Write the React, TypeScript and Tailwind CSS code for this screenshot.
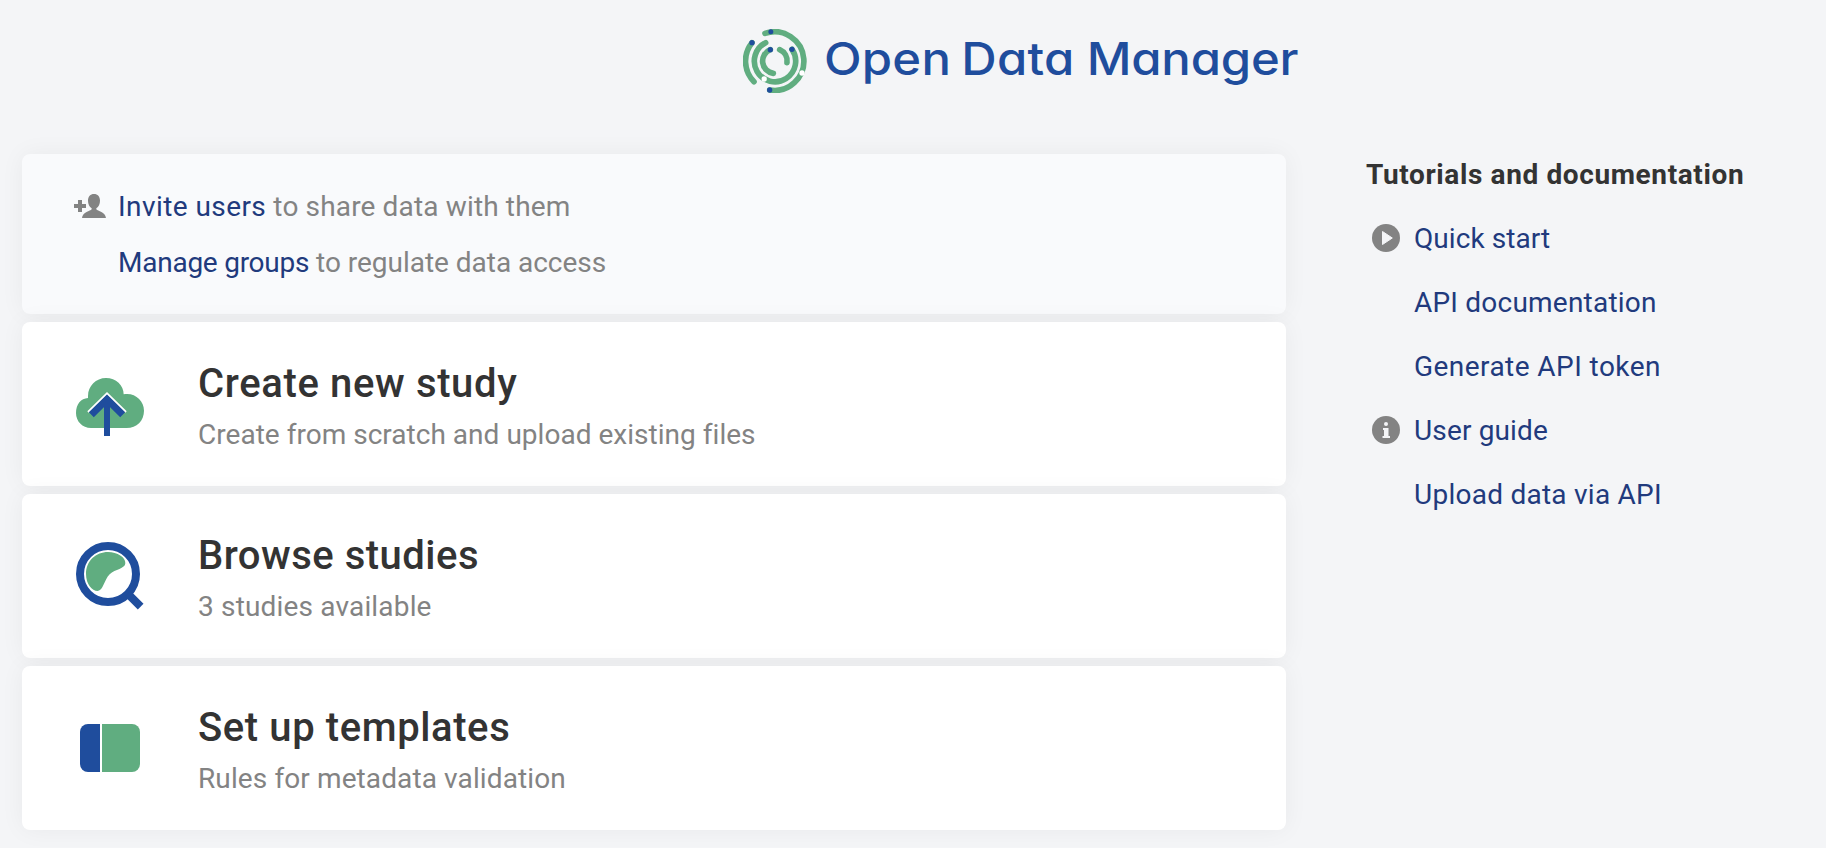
import type { ReactNode } from "react";

function Logo() {
  return (
    <svg className="size-16 shrink-0" viewBox="39 42 192 192" fill="none" aria-hidden="true">
      <g stroke="#60ad80" strokeWidth="17" strokeLinecap="round">
        <path d="M105 55A88 88 0 1 1 119 225" />
        <path d="M66 83A88 88 0 0 0 72 200" />
        <path d="M107 83A62 62 0 1 0 186 103" />
        <path d="M121 104A37 37 0 0 0 130 175" />
        <path d="M149 104A37 37 0 0 1 171 143" />
      </g>
      <g fill="#1f4d9d">
        <circle cx="122.500" cy="50" r="7.500" />
        <circle cx="66" cy="83" r="8" />
        <circle cx="121" cy="104" r="8" />
        <circle cx="186" cy="103" r="8" />
        <circle cx="119" cy="225" r="8" />
      </g>
      <g fill="#fff">
        <circle cx="216" cy="174" r="8" />
        <circle cx="102.500" cy="192" r="8" />
      </g>
    </svg>
  );
}

function CloudIcon() {
  return (
    <svg className="h-[58px] w-[68px]" viewBox="48 84 204 174" fill="none" aria-hidden="true">
      <path
        d="M93 234C67 234 48 214 48 189C48 163 63 145 84 144V138C84 108 108 84 138 84C168 84 191 106 191 133C225 127 252 152 252 182C252 212 230 234 200 234Z"
        fill="#60ad80"
      />
      <path d="M84 186L141 130L198 186" stroke="#fff" strokeWidth="6" />
      <path d="M94 194L141 148L188 194" stroke="#1f4d9d" strokeWidth="21" />
      <path d="M141 150V258" stroke="#1f4d9d" strokeWidth="18" />
    </svg>
  );
}

function BrowseIcon() {
  return (
    <svg className="size-[68px]" viewBox="48 66 204 204" fill="none" aria-hidden="true">
      <circle cx="144" cy="162" r="84" stroke="#1f4d9d" strokeWidth="24" />
      <path d="M203 221L242 260" stroke="#1f4d9d" strokeWidth="24" />
      <path
        d="M78 162C78 122 108 96 144 96C172 96 197 112 196 130C195 147 166 147 149 163C132 180 130 212 113 213C96 213 78 192 78 162Z"
        fill="#60ad80"
      />
    </svg>
  );
}

function TemplateIcon() {
  return (
    <div className="ml-1 flex h-12 w-[60px] gap-0.5">
      <div className="w-5 rounded-l-lg bg-[#1f4d9d]" />
      <div className="flex-1 rounded-r-lg bg-[#60ad80]" />
    </div>
  );
}

function InviteIcon() {
  return (
    <svg className="h-6 w-8" viewBox="192 162 96 72" fill="#838383" aria-hidden="true">
      <path d="M204 180H216V192H228V204H216V216H204V204H192V192H204Z" />
      <path d="M252 162C263 162 270 170 270 182C270 192 266 200 259 205V208C263 214 286 216 288 234H216C218 216 241 214 245 208V205C238 200 234 192 234 182C234 170 241 162 252 162Z" />
    </svg>
  );
}

function PlayIcon() {
  return (
    <svg className="size-7" viewBox="0 0 28 28" aria-hidden="true">
      <circle cx="14" cy="14" r="14" fill="#838383" />
      <path d="M10.500 7.500L20.300 14L10.500 20.500Z" fill="#f4f5f7" stroke="#f4f5f7" strokeWidth="1" strokeLinejoin="round" />
    </svg>
  );
}

function InfoIcon() {
  return (
    <svg className="size-7" viewBox="0 0 28 28" aria-hidden="true">
      <circle cx="14" cy="14" r="14" fill="#838383" />
      <circle cx="14" cy="8" r="2" fill="#f4f5f7" />
      <path d="M11 12H16.500V20H18V22H10.500V20H12V14H11Z" fill="#f4f5f7" />
    </svg>
  );
}

function ActionCard({ icon, title, sub }: { icon: ReactNode; title: ReactNode; sub: ReactNode }) {
  return (
    <section className="flex h-[164px] rounded-lg bg-white pl-[54px] shadow-[0_0_24px_rgba(0,0,0,0.05)]">
      <div className="flex w-[122px] shrink-0 items-start">{icon}</div>
      <div className="pt-[38px]">
        <h2 className="text-[40px] leading-[48px] font-medium text-[#333]">{title}</h2>
        <p className="mt-[7px] text-[28px] leading-10 text-[#838383]">{sub}</p>
      </div>
    </section>
  );
}

function DocLink({ icon, children }: { icon?: ReactNode; children: ReactNode }) {
  return (
    <li className="flex h-16 items-center">
      <span className="ml-[5px] w-[42px]">{icon}</span>
      <a className="pt-0.5 text-[28px] leading-[62px] text-[#213a7d]">{children}</a>
    </li>
  );
}

export default function App() {
  return (
    <div className="h-[848px] w-[1826px] overflow-hidden bg-[#f4f5f7] font-[Roboto,sans-serif] whitespace-nowrap">
      <header className="flex h-[142px] items-start pt-[29px] pl-[743px]">
        <Logo />
        <h1 className="ml-[17px] flex origin-left scale-x-[1.09] font-[Inter,sans-serif] text-[45px] leading-[59px] font-medium text-[#1f4d9d] [font-feature-settings:'cv11']">
          <span className="w-[126px] tracking-[0.200px]">Open</span>
          <span className="w-[115px] tracking-[0.200px]">Data</span>
          <span className="tracking-[-0.200px]">Manager</span>
        </h1>
      </header>

      <div className="flex">
        <main className="mt-3 ml-[22px] flex w-[1264px] flex-col gap-2">
          <section className="flex h-40 rounded-lg bg-[#f9fafc] pt-6 pl-[52px] text-[28px] leading-[56px] shadow-[0_0_24px_rgba(0,0,0,0.05)]">
            <div className="w-11 pt-4">
              <InviteIcon />
            </div>
            <div className="pt-px text-[#838383]">
              <p>
                <a className="tracking-[0.430px] text-[#213a7d]">Invite users</a>
                <span className="tracking-[0.15px]"> to share data with them</span>
              </p>
              <p>
                <a className="tracking-[-0.246px] text-[#213a7d]">Manage groups</a>
                <span className="tracking-[-0.03px]"> to regulate data access</span>
              </p>
            </div>
          </section>
          <ActionCard
            icon={<div className="pt-14"><CloudIcon /></div>}
            title={<span className="tracking-[0.640px]">Create new study</span>}
            sub={<span className="tracking-[0.025px]">Create from scratch and upload existing files</span>}
          />
          <ActionCard
            icon={<div className="pt-12"><BrowseIcon /></div>}
            title={<span className="tracking-[0.490px]">Browse studies</span>}
            sub={<span className="tracking-[0.170px]">3 studies available</span>}
          />
          <ActionCard
            icon={<div className="pt-[58px]"><TemplateIcon /></div>}
            title={<span className="tracking-[0.600px]">Set up templates</span>}
            sub={<span className="tracking-[0.110px]">Rules for metadata validation</span>}
          />
        </main>

        <aside className="ml-20">
          <h3 className="pt-0.5 text-[28px] leading-[62px] font-bold tracking-[0.620px] text-[#333]">
            Tutorials and documentation
          </h3>
          <ul className="ml-px">
            <DocLink icon={<PlayIcon />}><span className="tracking-[0.069px]">Quick start</span></DocLink>
            <DocLink><span className="tracking-[0.217px]">API documentation</span></DocLink>
            <DocLink><span className="tracking-[0.443px]">Generate API token</span></DocLink>
            <DocLink icon={<InfoIcon />}><span className="tracking-[0.15px]">User guide</span></DocLink>
            <DocLink><span className="tracking-[0.252px]">Upload data via API</span></DocLink>
          </ul>
        </aside>
      </div>
    </div>
  );
}
